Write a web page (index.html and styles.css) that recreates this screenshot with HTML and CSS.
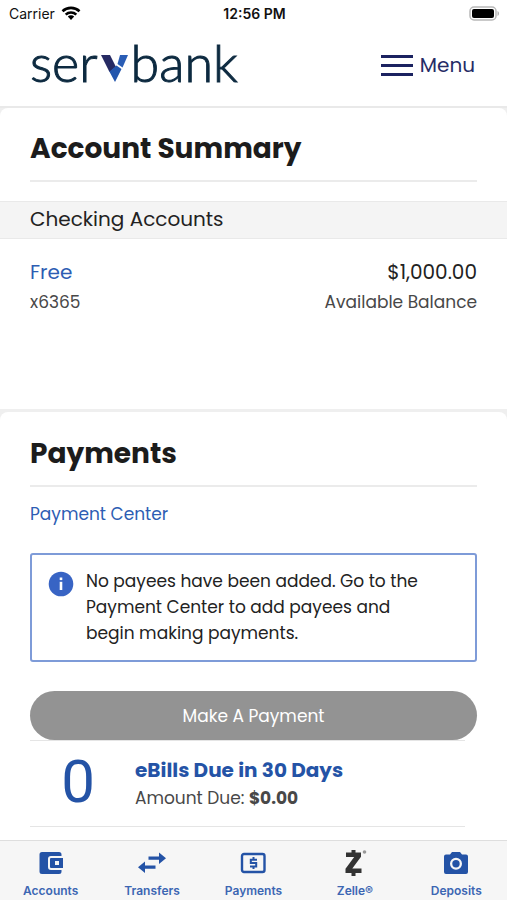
FILE: index.html
```html
<!DOCTYPE html>
<html lang="en">
<head>
<meta charset="utf-8">
<meta name="viewport" content="width=device-width, initial-scale=1">
<title>Servbank</title>
<link rel="stylesheet" href="styles.css">
</head>
<body>
<div class="status">
  <div class="carrier">Carrier
    <svg width="20" height="14" viewBox="0 0 20 14" fill="none" stroke="#000" stroke-width="2.6"><path d="M1.5 5.3a12.3 12.3 0 0 1 17 0M4.7 8.6a7.7 7.7 0 0 1 10.6 0"/><path d="M10 14l-3.2-3.4a4.6 4.6 0 0 1 6.4 0z" fill="#000" stroke="none"/></svg>
  </div>
  <div class="time">12:56 PM</div>
  <div class="battery">
    <svg width="31" height="15" viewBox="0 0 31 15"><rect x="1" y="1" width="26" height="13" rx="4" fill="#fff" stroke="#b8b8b8" stroke-width="1.5"/><rect x="3" y="3" width="22" height="9" rx="2" fill="#000"/><path d="M28.5 5c2 .8 2 4.200 0 5z" fill="#b0b0b0"/></svg>
  </div>
</div>
<header class="header">
  <a class="logo" href="#" aria-label="servbank"><span>ser</span><svg width="27" height="27" viewBox="0 0 27 27"><path d="M0 0h9l6 12-6.500 5z" fill="#262a63"/><path d="M7 14l1.500 2.500 7-6 5 3.500L14 27z" fill="#2356ad"/><path d="M19 0h8l-5.500 12.500-5-3.500z" fill="#2a5db5"/></svg><span>bank</span></a>
  <button class="menu" type="button">
    <svg width="32" height="23" viewBox="0 0 32 23"><path d="M0 2.500h32M0 11.500h32M0 20.500h32" stroke="#1b2260" stroke-width="3"/></svg>
    Menu
  </button>
</header>
<main>
  <section class="card summary">
    <h1 class="title">Account Summary</h1>
    <h2 class="band">Checking Accounts</h2>
    <div class="account">
      <div><a class="big" href="#">Free</a><p class="small">x6365</p></div>
      <div class="right"><p class="big">$1,000.00</p><p class="small">Available Balance</p></div>
    </div>
  </section>
  <section class="card payments">
    <h1 class="title">Payments</h1>
    <a class="center-link" href="#">Payment Center</a>
    <div class="notice">
      <svg width="26" height="26" viewBox="0 0 26 26"><circle cx="13" cy="13" r="12.300" fill="#3864c4"/><path d="M13 10.800v8.200" stroke="#fff" stroke-width="2.600"/><path d="M13 6.500v2.600" stroke="#fff" stroke-width="2.600"/></svg>
      <p>No payees have been added. Go to the Payment Center to add payees and begin making payments.</p>
    </div>
    <button class="pay" type="button">Make A Payment</button>
    <div class="ebills">
      <div class="count">0</div>
      <div><a class="due" href="#">eBills Due in 30 Days</a><p class="small">Amount Due: <b>$0.00</b></p></div>
    </div>
  </section>
</main>
<nav class="tabs">
  <a href="#"><svg width="26" height="26" viewBox="0 0 26 26"><path d="M4 2h17q2.500 0 2.500 2.500V6H13q-3 0-3 3v8q0 3 3 3h10.500v1.500Q23.500 24 21 24H4q-2.500 0-2.500-2.500v-17Q1.500 2 4 2z" fill="#2453a6"/><path fill-rule="evenodd" d="M13 8h12v10H13q-1 0-1-1V9q0-1 1-1zm4 3v4h4v-4z" fill="#2453a6"/></svg>Accounts</a>
  <a href="#"><svg width="28" height="26" viewBox="0 0 28 26" fill="#2453a6"><path d="M10.500 6.500H21V2.500l7 5.700-7 5.700V9.800H10.500zM17.500 15.500H7v-4l-7 5.700 7 5.700v-4.100h10.500z"/></svg>Transfers</a>
  <a href="#"><svg width="26" height="26" viewBox="0 0 26 26" fill="none" stroke="#2453a6"><rect x="2" y="4" width="22.500" height="18" rx="2" stroke-width="2.400"/><path d="M17 9.700h-6.200v3.300h5.400v3.400H10M13.500 7v3M13.500 16v3" stroke-width="2"/></svg>Payments</a>
  <a href="#"><svg width="26" height="26" viewBox="0 0 26 26"><path d="M4 2.500h15v4.300l-8.700 11.700H19.500V23H3.500v-4.300l8.700-11.700H4z" fill="#333"/><path d="M9.500 0h4v4h-4zM9.500 21.500h4V26h-4z" fill="#333"/><circle cx="22.500" cy="2" r="1.800" fill="#999"/></svg>Zelle®</a>
  <a href="#"><svg width="26" height="26" viewBox="0 0 26 26"><path fill-rule="evenodd" d="M9 2h8l2 2.500h4q2 0 2 2V22q0 2-2 2H3q-2 0-2-2V6.500q0-2 2-2h4zm4 5.800a6 6 0 1 0 0 12 6 6 0 1 0 0-12z" fill="#2453a6"/><circle cx="13" cy="13.800" r="3.700" fill="#2453a6"/></svg>Deposits</a>
</nav>
</body>
</html>
```
FILE: styles.css
```css
* { box-sizing: border-box; margin: 0; }
body {
  min-height: 100vh;
  display: flex;
  flex-direction: column;
  background: #fff;
  color: #222;
  font-family: Poppins, Inter, sans-serif;
  font-size: 17px;
}
a { color: #2d5db3; text-decoration: none; }
button { font: inherit; border: 0; cursor: pointer; }
svg { display: block; flex: none; }

.status {
  display: grid;
  grid-template-columns: 1fr auto 1fr;
  align-items: center;
  flex: none;
  height: 26px;
  padding: 0 7px 0 9px;
  color: #111;
  font-family: Inter, sans-serif;
  font-size: 14px;
}
.carrier { display: flex; align-items: center; gap: 6px; }
.time { font-weight: 600; }
.battery { justify-self: end; }

.header {
  display: flex;
  align-items: center;
  justify-content: space-between;
  flex: none;
  height: 82px;
  padding: 2px 32px 4px 30px;
  border-bottom: 2px solid #e9e9e9;
}
.logo {
  display: flex;
  align-items: baseline;
  gap: 3px;
  padding-bottom: 6px;
  color: #0d2a40;
  font-family: Lato, sans-serif;
  font-weight: 300;
  font-size: 52px;
  line-height: 60px;
  -webkit-text-stroke: 1px #0d2a40;
}
.menu {
  display: flex;
  align-items: center;
  gap: 7px;
  padding: 0;
  background: none;
  color: #262c66;
  font-size: 20px;
}

main { flex: 1 0 auto; background: #efefef; }
.card {
  padding: 24px 30px 0;
  background: #fff;
  border-radius: 8px 8px 0 0;
}
.title {
  padding-bottom: 14px;
  border-bottom: 2px solid #ebebeb;
  color: #1c1c1c;
  font-size: 28px;
  line-height: 34px;
}
.summary { min-height: 301px; }
.band {
  margin: 19px -30px 0;
  padding: 0 30px 1px;
  border: solid #e9e9e9;
  border-width: 1px 0;
  background: #f4f4f4;
  font-weight: 400;
  font-size: 20px;
  line-height: 35px;
}
.account { display: flex; justify-content: space-between; padding-top: 17px; }
.right { text-align: right; }
.big { display: block; font-size: 20px; line-height: 32px; }
.small { color: #484848; font-size: 17px; line-height: 28px; }

.payments { margin-top: 3px; padding-top: 25px; padding-bottom: 13px; }
.center-link { display: block; margin-top: 13px; line-height: 28px; }
.notice {
  display: flex;
  gap: 12px;
  margin-top: 25px;
  padding: 13px 40px 14px 16px;
  border: 2px solid #7e9bd8;
  border-radius: 3px;
  line-height: 26px;
}
.notice svg { margin-top: 3px; }
.pay {
  display: block;
  width: 100%;
  height: 49px;
  margin-top: 29px;
  border-radius: 25px;
  background: #939393;
  color: #fff;
}
.ebills {
  display: grid;
  grid-template-columns: 105px 1fr;
  align-items: center;
  margin-right: 12px;
  height: 87px;
  border: solid #e5e5e5;
  border-width: 1px 0;
}
.count {
  padding: 0 9px 4px 0;
  text-align: center;
  color: #2453a6;
  font-family: Roboto, sans-serif;
  font-size: 60px;
  line-height: 60px;
}
.due { display: block; color: #2453a6; font-weight: 700; font-size: 20px; line-height: 28px; }

.tabs {
  position: sticky;
  bottom: 0;
  display: grid;
  grid-template-columns: repeat(5, 1fr);
  flex: none;
  height: 60px;
  border-top: 1px solid #dedede;
  background: #f6f6f6;
}
.tabs a {
  display: flex;
  flex-direction: column;
  align-items: center;
  gap: 6px;
  padding-top: 9px;
  color: #3c66b3;
  font-family: Inter, sans-serif;
  font-weight: 600;
  font-size: 12px;
  line-height: 18px;
}
```
